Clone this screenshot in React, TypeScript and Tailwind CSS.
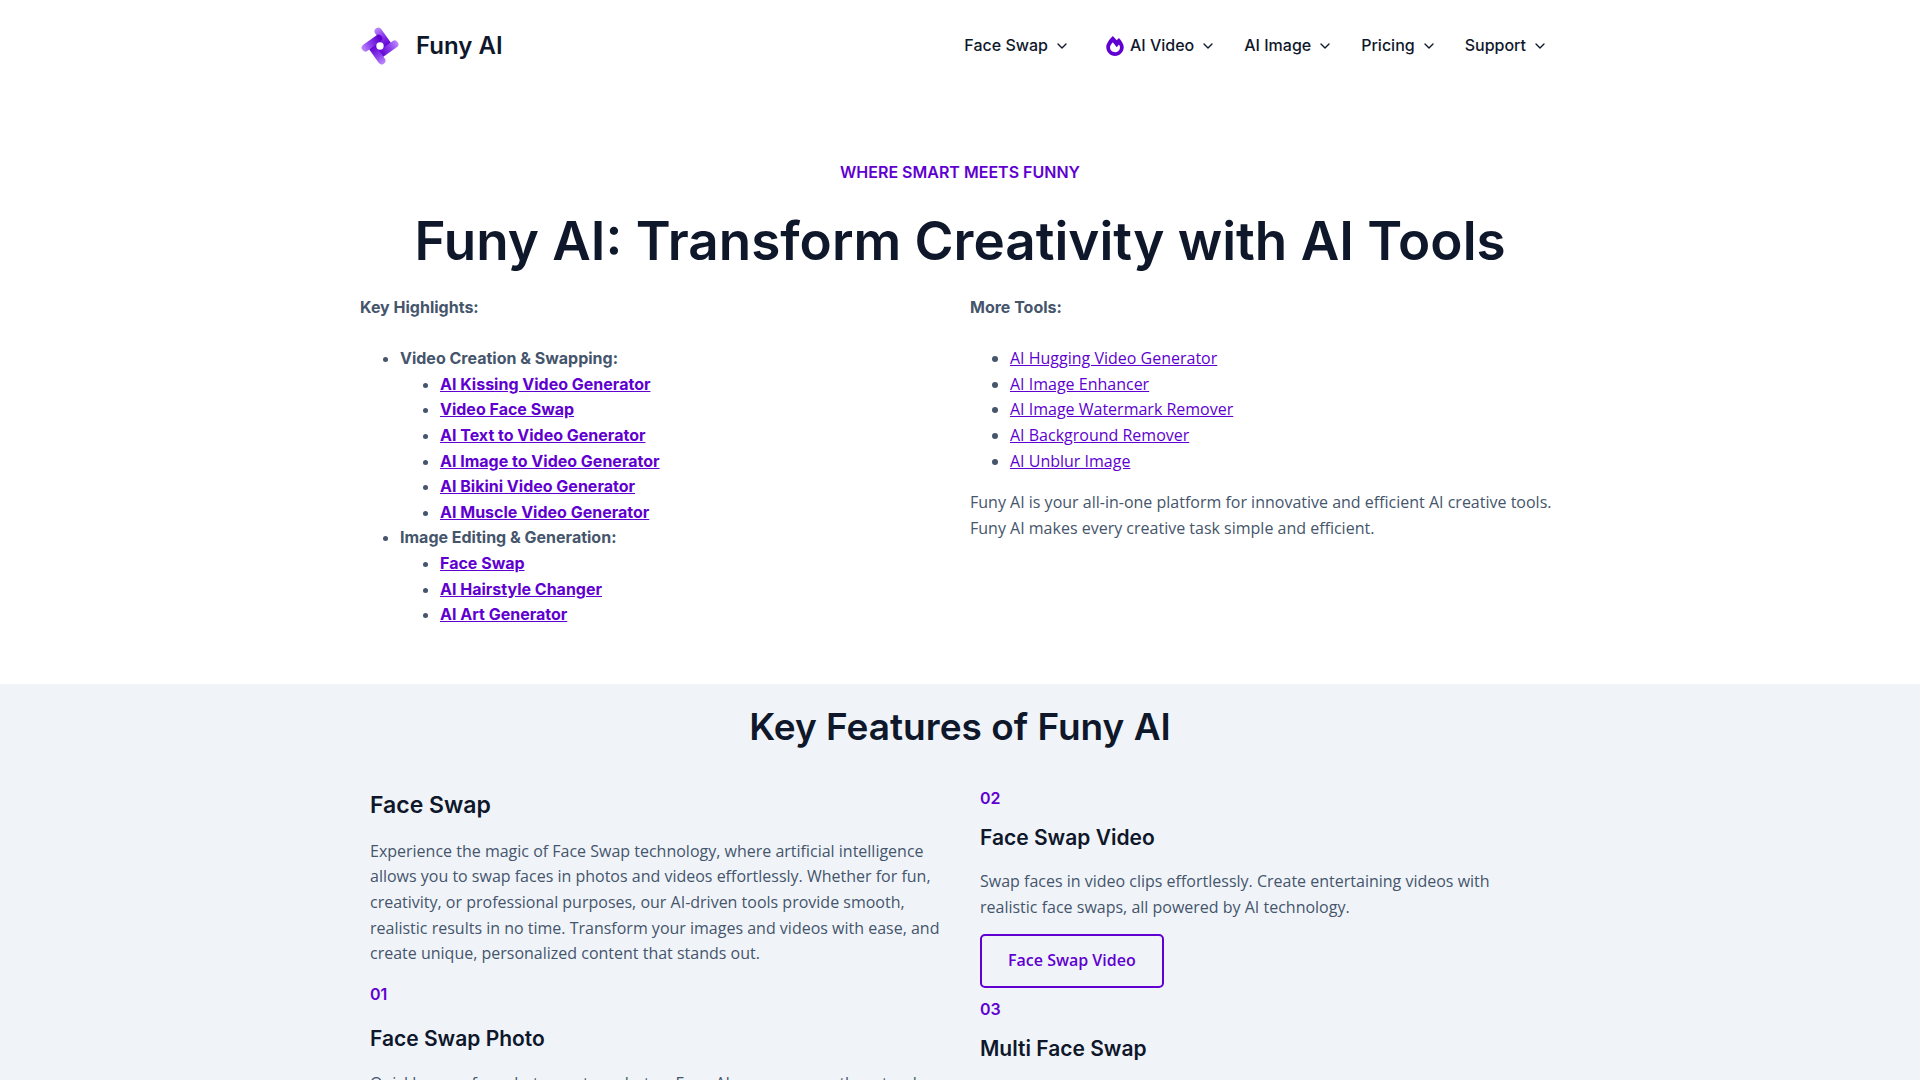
import type { ReactNode } from "react";
import { ChevronDown } from "lucide-react";
import { FaFireAlt } from "react-icons/fa";

const navItems = ["Face Swap", "AI Video", "AI Image", "Pricing", "Support"];

const highlights = [
  {
    title: "Video Creation & Swapping:",
    links: [
      "AI Kissing Video Generator",
      "Video Face Swap",
      "AI Text to Video Generator",
      "AI Image to Video Generator",
      "AI Bikini Video Generator",
      "AI Muscle Video Generator",
    ],
  },
  {
    title: "Image Editing & Generation:",
    links: ["Face Swap", "AI Hairstyle Changer", "AI Art Generator"],
  },
];

const moreTools = [
  "AI Hugging Video Generator",
  "AI Image Enhancer",
  "AI Image Watermark Remover",
  "AI Background Remover",
  "AI Unblur Image",
];

function Logo() {
  return (
    <svg className="size-10" viewBox="0 0 40 40" aria-hidden="true">
      <defs>
        <linearGradient id="blade" gradientUnits="userSpaceOnUse" x1="17" y1="3" x2="27" y2="20">
          <stop offset="0" stopColor="#b983fa" />
          <stop offset="0.45" stopColor="#8a3cec" />
          <stop offset="1" stopColor="#6000d0" />
        </linearGradient>
      </defs>
      <circle cx="20" cy="20" r="8" fill="#6000d0" />
      {[0, 90, 180, 270].map((a) => (
        <path
          key={a}
          d="M18.3 5.4 27.5 18.5"
          transform={`rotate(${a} 20 20)`}
          stroke="url(#blade)"
          strokeWidth="7.5"
          strokeLinecap="round"
        />
      ))}
      <circle cx="20" cy="20" r="3.7" fill="#fff" />
    </svg>
  );
}

function Eyebrow({ children }: { children: ReactNode }) {
  return <p className="font-['Inter',sans-serif] font-semibold text-[#6000d0]">{children}</p>;
}

function CardTitle({ children }: { children: ReactNode }) {
  return (
    <h4 className="font-['Inter',sans-serif] text-[21px] leading-7 font-semibold text-slate-900">{children}</h4>
  );
}

export default function App() {
  return (
    <div className="bg-white font-['Open_Sans',sans-serif] text-base leading-[1.6] text-slate-600">
      <header className="mx-auto flex h-23 max-w-300 items-center justify-between pr-3 font-['Inter',sans-serif]">
        <a href="#" className="flex items-center gap-4 text-2xl font-semibold text-slate-900">
          <Logo />
          Funy AI
        </a>
        <nav className="flex items-center gap-7 font-medium text-slate-900">
          {navItems.map((item) => (
            <a key={item} href="#" className="flex items-center">
              {item === "AI Video" && <FaFireAlt className="mr-1.5 ml-2 h-5 w-[18px] text-[#6000d0]" />}
              {item}
              <ChevronDown className="ml-1.5 size-4" strokeWidth={2} aria-hidden="true" />
            </a>
          ))}
        </nav>
      </header>

      <main>
        <section className="mx-auto max-w-300 pt-[68px] pb-10">
          <div className="text-center">
            <Eyebrow>WHERE SMART MEETS FUNNY</Eyebrow>
          </div>
          <h1 className="mt-5 mb-[19px] text-center font-['Inter',sans-serif] text-[53px] leading-[70px] font-semibold text-slate-900">
            Funy AI: Transform Creativity with AI Tools
          </h1>
          <div className="grid grid-cols-2 gap-5">
            <div className="font-['Inter',sans-serif] font-bold">
              <p className="mb-[26px]">Key Highlights:</p>
              <ul className="mb-4 list-disc pl-10">
                {highlights.map((group) => (
                  <li key={group.title}>
                    {group.title}
                    <ul className="list-disc pl-10">
                      {group.links.map((link) => (
                        <li key={link}>
                          <a href="#" className="text-[#6000d0] underline">
                            {link}
                          </a>
                        </li>
                      ))}
                    </ul>
                  </li>
                ))}
              </ul>
            </div>
            <div>
              <p className="mb-[26px] font-['Inter',sans-serif] font-bold">More Tools:</p>
              <ul className="mb-4 list-disc pl-10">
                {moreTools.map((tool) => (
                  <li key={tool}>
                    <a href="#" className="text-[#6000d0] underline">
                      {tool}
                    </a>
                  </li>
                ))}
              </ul>
              <p>
                Funy AI is your all-in-one platform for innovative and efficient AI creative tools. Funy AI makes every
                creative task simple and efficient.
              </p>
            </div>
          </div>
        </section>

        <section className="bg-[#f0f4f9] pb-10">
          <div className="mx-auto max-w-300 pt-[17px]">
            <h2 className="text-center font-['Inter',sans-serif] text-[37px] leading-[52px] font-semibold text-slate-900">
              Key Features of Funy AI
            </h2>
            <div className="mt-8 grid grid-cols-2 gap-5">
              <div className="px-2.5">
                <h3 className="pt-1 font-['Inter',sans-serif] text-[23px] leading-8 font-semibold text-slate-900">
                  Face Swap
                </h3>
                <p className="mt-[18px] mb-[15px]">
                  Experience the magic of Face Swap technology, where artificial intelligence
                  <br />
                  allows you to swap faces in photos and videos effortlessly. Whether for fun,
                  <br />
                  creativity, or professional purposes, our AI-driven tools provide smooth,
                  <br />
                  realistic results in no time. Transform your images and videos with ease, and
                  <br />
                  create unique, personalized content that stands out.
                </p>
                <Eyebrow>01</Eyebrow>
                <div className="mt-[18px] mb-[18px]">
                  <CardTitle>Face Swap Photo</CardTitle>
                </div>
                <p>
                  Quickly swap faces between two photos. Funy AI ensures smooth, natural
                  <br />
                  results every time.
                </p>
              </div>
              <div className="px-2.5 pt-px">
                <Eyebrow>02</Eyebrow>
                <div className="mt-[13px] mb-[17px]">
                  <CardTitle>Face Swap Video</CardTitle>
                </div>
                <p>
                  Swap faces in video clips effortlessly. Create entertaining videos with
                  <br />
                  realistic face swaps, all powered by AI technology.
                </p>
                <button
                  type="button"
                  className="mt-[13px] mb-[9px] block h-[54px] rounded-[5px] border-2 border-[#6000d0] px-[26px] font-semibold text-[#6000d0]"
                >
                  Face Swap Video
                </button>
                <Eyebrow>03</Eyebrow>
                <div className="mt-[13px]">
                  <CardTitle>Multi Face Swap</CardTitle>
                </div>
              </div>
            </div>
          </div>
        </section>
      </main>
    </div>
  );
}
